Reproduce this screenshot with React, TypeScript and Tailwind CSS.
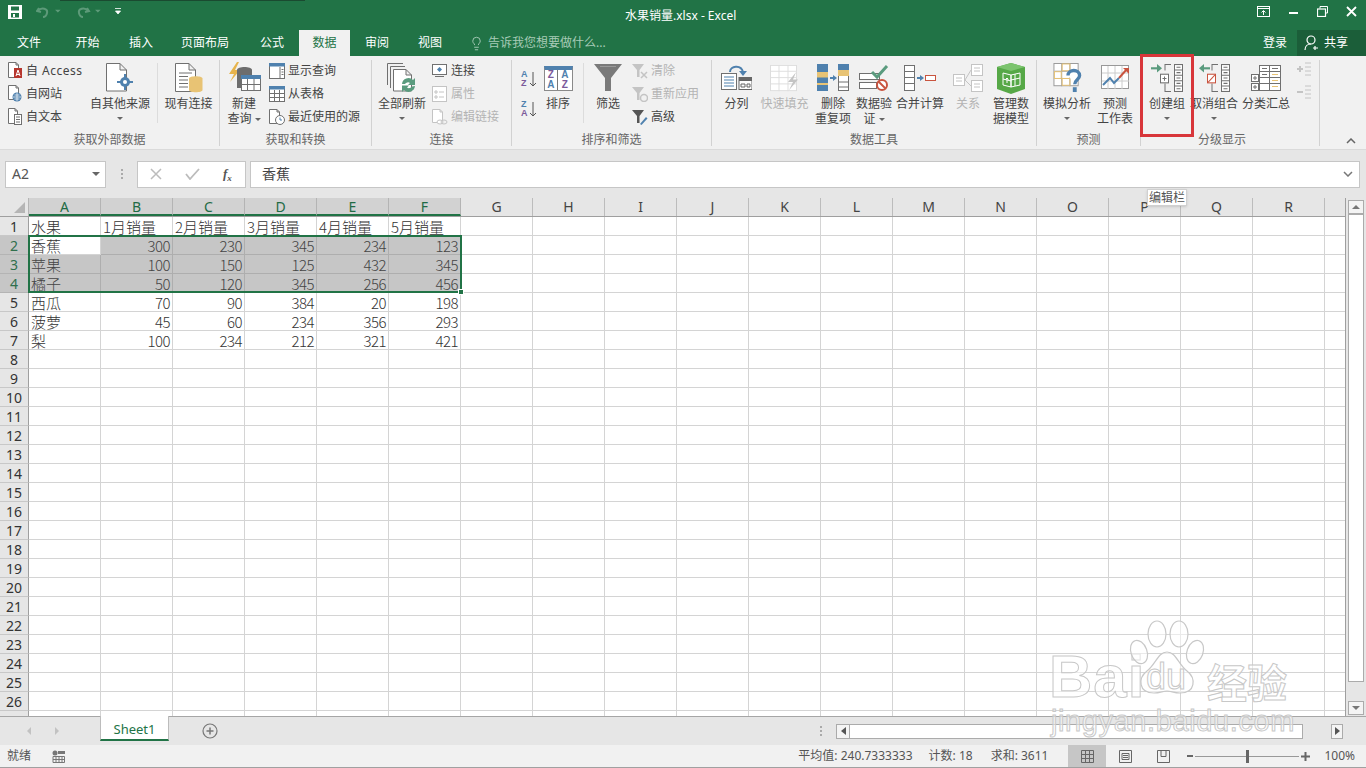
import type { ReactNode } from 'react'
import { Lightbulb } from 'lucide-react'

const FONT = "[font-family:'Noto_Sans','Noto_Sans_CJK_SC',sans-serif]"

const COLS = ['A', 'B', 'C', 'D', 'E', 'F', 'G', 'H', 'I', 'J', 'K', 'L', 'M', 'N', 'O', 'P', 'Q', 'R', '']

const DATA: (string | number)[][] = [
  ['水果', '1月销量', '2月销量', '3月销量', '4月销量', '5月销量'],
  ['香蕉', 300, 230, 345, 234, 123],
  ['苹果', 100, 150, 125, 432, 345],
  ['橘子', 50, 120, 345, 256, 456],
  ['西瓜', 70, 90, 384, 20, 198],
  ['菠萝', 45, 60, 234, 356, 293],
  ['梨', 100, 234, 212, 321, 421],
]

const ROWS = Array.from({ length: 27 }, (_, i) => i + 1)

const LINE = '#707070'
const BLUE = '#4f81ae'
const YEL = '#e8c374'
const OFF = '#c4c4c4'

/* ---------- ribbon icons ---------- */

function Doc({ x = 0, y = 0, w = 24, h = 30, c = LINE }: { x?: number; y?: number; w?: number; h?: number; c?: string }) {
  const f = Math.round(w * 0.3)
  return (
    <path
      d={`M${x + 0.5} ${y + 0.5}H${x + w - f}L${x + w - 0.5} ${y + f}V${y + h - 0.5}H${x + 0.5}ZM${x + w - f} ${y + 0.5}V${y + f}H${x + w - 0.5}`}
      fill="#fff"
      stroke={c}
    />
  )
}

function IconAccess() {
  return (
    <svg width="14" height="17" viewBox="0 0 14 17">
      <Doc w={11} h={16} />
      <rect x="6" y="6" width="8" height="10" fill="#b7372f" />
      <path d="M8 14l2-6 2 6M8.800 12.500h2.400" stroke="#fff" fill="none" />
    </svg>
  )
}

function IconWeb() {
  return (
    <svg width="14" height="17" viewBox="0 0 14 17">
      <Doc w={11} h={15} />
      <circle cx="9" cy="12" r="4.500" fill={BLUE} />
      <path d="M5 12h8M9 8v8M6.500 10h5M6.500 14h5" stroke="#fff" strokeWidth=".7" />
    </svg>
  )
}

function IconText() {
  return (
    <svg width="14" height="17" viewBox="0 0 14 17">
      <Doc w={10} h={16} />
      <rect x="6.500" y="6.500" width="7" height="10" fill="#fff" stroke={LINE} />
      <path d="M8 9h4M8 11.500h4M8 14h4" stroke={LINE} />
    </svg>
  )
}

function IconOther() {
  return (
    <svg width="28" height="31" viewBox="0 0 28 31">
      <path d="M.5.5H14L20.500 7V28H.5Z M14 .5V7H20.500" fill="#fff" stroke={LINE} />
      <path d="M19 11v4M19 23v4M11 19h4M23 19h4" stroke={BLUE} strokeWidth="2" />
      <circle cx="19" cy="19" r="5" fill={BLUE} />
      <circle cx="19" cy="19" r="2" fill="#fff" />
    </svg>
  )
}

function IconExisting() {
  return (
    <svg width="28" height="30" viewBox="0 0 28 30">
      <path d="M.5.5H14L20.500 7V28.500H.5Z M14 .5V7H20.500" fill="#fff" stroke={LINE} />
      <path d="M4 10h13M4 13.500h9M4 17h9M4 20.500h9M4 24h9" stroke={LINE} />
      <path d="M14 15.500c0-3 13.500-3 13.500 0V27c0 3-13.500 3-13.500 0Z" fill={YEL} />
    </svg>
  )
}

function IconNewQuery() {
  return (
    <svg width="33" height="32" viewBox="0 0 33 32">
      <path d="M9 0L1 12h5L2 20 12 8H7l4-8Z" fill="#e8b44c" />
      <path d="M9 8c0-4 15-4 15 0v18H9Z" fill="#6d6d6d" />
      <rect x="13.500" y="13.500" width="19" height="15" fill="#fff" stroke={LINE} />
      <rect x="13" y="13" width="20" height="4" fill={BLUE} />
      <path d="M19.500 17v11M26 17v11M14 22.500h18" stroke={LINE} />
    </svg>
  )
}

function IconShowQuery() {
  return (
    <svg width="16" height="16" viewBox="0 0 16 16">
      <rect x=".5" y=".5" width="15" height="15" fill="#fff" stroke={LINE} />
      <rect width="16" height="3.500" fill={BLUE} />
      <path d="M11 4v11M12.500 6.500h2M12.500 9h2M12.500 11.500h2" stroke={LINE} />
    </svg>
  )
}

function IconFromTable() {
  return (
    <svg width="16" height="16" viewBox="0 0 16 16">
      <rect x=".5" y=".5" width="15" height="15" fill="#fff" stroke={LINE} />
      <rect width="16" height="3.500" fill={BLUE} />
      <path d="M5.500 4v11M10.500 4v11M1 7.500h14M1 11.500h14" stroke={LINE} />
    </svg>
  )
}

function IconRecent() {
  return (
    <svg width="16" height="16" viewBox="0 0 16 16">
      <Doc w={11} h={15} />
      <circle cx="11" cy="11" r="4.500" fill="#fff" stroke={LINE} />
      <path d="M11 8.500V11h2" stroke={BLUE} fill="none" />
    </svg>
  )
}

function IconRefresh() {
  return (
    <svg width="30" height="31" viewBox="0 0 30 31">
      <path d="M.5.5H16M.5.5V22M3.500 3.500H18M3.500 3.500V25" stroke={LINE} fill="none" />
      <path d="M6.500 6.500H19L24.500 12V28H6.500Z M19 6.500V12H24.500" fill="#fff" stroke={LINE} />
      <path d="M15 21a6.500 6.500 0 0 1 11-4l2-2v7h-7l2-2a3.500 3.500 0 0 0-5 1Z" fill="#5a9b7e" />
      <path d="M28 23a6.500 6.500 0 0 1-11 4l-2 2v-6.500h7l-2 2a3.500 3.500 0 0 0 5-1Z" fill="#5a9b7e" />
    </svg>
  )
}

function IconConnect() {
  return (
    <svg width="16" height="16" viewBox="0 0 16 16">
      <rect x=".5" y="1.500" width="14" height="10" fill="#fff" stroke={LINE} />
      <path d="M3 13.500h9" stroke={LINE} />
      <path d="M7.500 4l2.500 2.500L7.500 9 5 6.500Z" fill={BLUE} />
    </svg>
  )
}

function IconProps() {
  return (
    <svg width="16" height="16" viewBox="0 0 16 16">
      <rect x=".5" y=".5" width="14" height="15" fill="#fff" stroke={OFF} />
      <path d="M3 5h2v2H3ZM3 10h2v2H3ZM7 6h5M7 11h5" stroke={OFF} fill="none" />
    </svg>
  )
}

function IconEditLink() {
  return (
    <svg width="16" height="16" viewBox="0 0 16 16">
      <Doc w={11} h={14} c={OFF} />
      <ellipse cx="8" cy="13" rx="3" ry="2" fill="#fff" stroke={OFF} />
      <ellipse cx="12" cy="13" rx="3" ry="2" fill="none" stroke={OFF} />
    </svg>
  )
}

function SortLetters({ top, bottom }: { top: string; bottom: string }) {
  return (
    <div className="flex items-center gap-[1px]">
      <div className="flex flex-col text-[9px] leading-[9px] font-bold [font-family:'Liberation_Sans',sans-serif]">
        <span className="text-[#4f81ae]">{top}</span>
        <span className="text-[#7b5a9b]">{bottom}</span>
      </div>
      <svg width="8" height="15" viewBox="0 0 8 15">
        <path d="M4 0v14M1 11l3 3 3-3" stroke="#555" fill="none" />
      </svg>
    </div>
  )
}

function IconSort() {
  return (
    <div className="w-[29px] h-[25px] border border-[#8a8a8a] border-t-[4px] border-t-[#4f81ae] bg-white grid grid-cols-2 text-[10px] leading-[10px] font-bold text-center [font-family:'Liberation_Sans',sans-serif]">
      <div className="border-r border-[#777] flex flex-col">
        <span className="text-[#7b5a9b]">Z</span>
        <span className="text-[#4f81ae]">A</span>
      </div>
      <div className="flex flex-col">
        <span className="text-[#4f81ae]">A</span>
        <span className="text-[#7b5a9b]">Z</span>
      </div>
    </div>
  )
}

function IconFilter() {
  return (
    <svg width="28" height="28" viewBox="0 0 28 28">
      <path d="M0 0H28L17 14V27H11V14Z" fill="#7a7a7a" />
      <path d="M6 2.500H22" stroke="#9a9a9a" />
    </svg>
  )
}

function SmallFunnel({ c, children }: { c: string; children?: ReactNode }) {
  return (
    <svg width="16" height="16" viewBox="0 0 16 16">
      <path d="M0 1H12L7.500 7V14H5V7Z" fill={c} />
      {children}
    </svg>
  )
}

function IconTextCols() {
  return (
    <svg width="31" height="26" viewBox="0 0 31 26">
      <rect x=".5" y="8.500" width="15" height="16" fill="#fff" stroke={LINE} />
      <path d="M3 12h10M3 15h10M3 18h10M3 21h10" stroke={BLUE} />
      <rect x="18" y="12.500" width="13" height="12" fill="#fff" stroke="#666" />
      <path d="M18 12h13v4H18Z" fill="#666" />
      <path d="M20 19h4v3h-4ZM26 19h3v3h-3Z" fill="none" stroke="#666" />
      <path d="M9 7C9 1 20 -1 22 7" stroke={BLUE} strokeWidth="2" fill="none" />
      <path d="M18 6l4 5 4-5Z" fill={BLUE} />
    </svg>
  )
}

function IconFlashFill() {
  return (
    <svg width="30" height="27" viewBox="0 0 30 30" preserveAspectRatio="none">
      <rect x=".5" y=".5" width="26" height="28" fill="#fff" stroke="#ddd" />
      <path d="M1 7h26M1 14h26M1 21h26M9 1v28M18 1v28" stroke="#ddd" />
      <path d="M26 8l-8 11h5l-4 9 9-12h-5l3-8Z" fill={OFF} />
    </svg>
  )
}

function IconRemoveDup() {
  return (
    <svg width="32" height="28" viewBox="0 0 32 28">
      <rect width="11" height="27" fill={BLUE} />
      <rect y="8" width="11" height="5.500" fill={YEL} />
      <rect y="19" width="11" height="2" fill={YEL} />
      <rect x="21.500" y=".5" width="10" height="26" fill="#fff" stroke={LINE} />
      <rect x="21" width="11" height="6" fill={BLUE} />
      <rect x="21" y="6" width="11" height="6" fill={YEL} />
      <path d="M21 18h11M21 23h11" stroke={LINE} />
      <path d="M13 14h4" stroke={BLUE} strokeWidth="2" />
      <path d="M16 11l4 3-4 3Z" fill={BLUE} />
    </svg>
  )
}

function IconValidate() {
  return (
    <svg width="30" height="26" viewBox="0 0 30 26">
      <rect x=".5" y="8.500" width="20" height="6" fill="#fff" stroke={LINE} />
      <rect x=".5" y="17.500" width="17" height="6" fill="#fff" stroke={LINE} />
      <path d="M13 7l5 5L28 1" stroke="#5a9b7e" strokeWidth="3" fill="none" />
      <circle cx="23" cy="20" r="5" fill="#fff" stroke="#c9543f" strokeWidth="2" />
      <path d="M19.500 16.500l7 7" stroke="#c9543f" strokeWidth="2" />
    </svg>
  )
}

function IconConsolidate() {
  return (
    <svg width="32" height="26" viewBox="0 0 32 26">
      <rect x=".5" y=".5" width="10" height="25" fill="#fff" stroke={LINE} />
      <path d="M1 6.500h9M1 12.500h9M1 18.500h9" stroke={LINE} />
      <path d="M13 13h4" stroke={BLUE} strokeWidth="2" />
      <path d="M16 10l4 3-4 3Z" fill={BLUE} />
      <rect x="21.500" y="10.500" width="10" height="5" fill="#fff" stroke="#c9543f" />
    </svg>
  )
}

function IconRelation() {
  return (
    <svg width="30" height="28" viewBox="0 0 30 28">
      <rect x=".5" y="10.500" width="11" height="11" fill="#fff" stroke={OFF} />
      <rect x="18.500" y=".5" width="11" height="11" fill="#fff" stroke={OFF} />
      <rect x="18.500" y="16.500" width="11" height="11" fill="#fff" stroke={OFF} />
      <path d="M12 16L18 6M12 16l6 6M3 14h6M3 17h6M21 4h6M21 7h6M21 20h6M21 23h6" stroke={OFF} fill="none" />
    </svg>
  )
}

function IconDataModel() {
  return (
    <svg width="30" height="31" viewBox="0 0 30 31">
      <path d="M15 0L29 4V26L15 31 1 26V4Z" fill="#56a847" />
      <path d="M1 4L15 8 29 4 15 0Z" fill="#7cc46e" />
      <path d="M7 10l8 2v12l-8-2Z M15 12l9-2v12l-9 2Z" fill="none" stroke="#fff" />
      <path d="M19 11v12M15 17l9-2M7 16l8 2" stroke="#fff" />
      <path d="M11 20v-5M9.500 16.500L11 15l1.500 1.500" stroke="#fff" fill="none" />
    </svg>
  )
}

function IconWhatIf() {
  return (
    <svg width="29" height="30" viewBox="0 0 29 31">
      <rect x=".5" y=".5" width="25" height="23" fill="#fff" stroke="#999" />
      <path d="M8.500 1v23M17 1v23M1 8.500h25M1 16h25" stroke="#999" />
      <rect x="1" y="9" width="7" height="7" fill="none" stroke={YEL} />
      <rect x="9" y="1" width="8" height="7" fill="none" stroke={YEL} />
      <rect x="9" y="16" width="8" height="7" fill="none" stroke={YEL} />
      <path d="M15 13c0-7 12-7 12 0 0 4-5 4-5 9" stroke={BLUE} strokeWidth="3.500" fill="#fff" />
      <rect x="20" y="25" width="4" height="5" fill={BLUE} />
    </svg>
  )
}

function IconForecast() {
  return (
    <svg width="29" height="26" viewBox="0 0 29 26">
      <rect x=".5" y=".5" width="27" height="23" fill="#fff" stroke="#999" />
      <path d="M7 1v23M14 1v23M21 1v23M1 8h27M1 16h27" stroke="#ccc" />
      <path d="M2 20l7-7 4 5 5-5" stroke={BLUE} strokeWidth="2" fill="none" />
      <path d="M18 13l8-9" stroke="#c9543f" strokeWidth="2" />
      <path d="M22 3h6v6Z" fill="#c9543f" />
    </svg>
  )
}

function Outline() {
  return (
    <>
      <rect x="23.500" y=".5" width="8" height="25" fill="#fff" stroke={LINE} />
      <path d="M24 5.500h7M24 10.500h7M24 15.500h7M24 20.500h7M25.500 3h4M25.500 8h4M25.500 13h4M25.500 18h4M25.500 23h4" stroke={LINE} />
      <path d="M20 .5H14V6M14 18V25.500H20" stroke={LINE} fill="none" />
    </>
  )
}

function IconGroup() {
  return (
    <svg width="32" height="28" viewBox="0 0 32 26" preserveAspectRatio="none">
      <Outline />
      <path d="M0 4h7" stroke="#5a9b7e" strokeWidth="2" />
      <path d="M6 0l5 4-5 4Z" fill="#5a9b7e" />
      <rect x="9.500" y="9.500" width="8" height="8" fill="#fff" stroke={LINE} />
      <path d="M11.500 13.500h4M13.500 11.500v4" stroke={LINE} />
    </svg>
  )
}

function IconUngroup() {
  return (
    <svg width="32" height="28" viewBox="0 0 32 26" preserveAspectRatio="none">
      <Outline />
      <path d="M5 4h7" stroke="#5a9b7e" strokeWidth="2" />
      <path d="M6 0L1 4l5 4Z" fill="#5a9b7e" />
      <rect x="9.500" y="9.500" width="8" height="8" fill="#fff" stroke="#c9543f" />
      <path d="M10 17l7-7" stroke="#c9543f" />
    </svg>
  )
}

function IconSubtotal() {
  return (
    <svg width="30" height="26" viewBox="0 0 30 26">
      <rect x="8.500" y=".5" width="21" height="25" fill="#fff" stroke={LINE} />
      <path d="M8 6.500h21M8 12.500h21M8 18.500h21M18.500 1v24" stroke={LINE} />
      <path d="M11 3.500h5M21 3.500h6M11 9.500h5" stroke={LINE} />
      <path d="M21 9.500h6M21 15.500h6M21 21.500h6" stroke={YEL} />
      <rect x=".5" y="9.500" width="7" height="7" fill="#fff" stroke={LINE} />
      <rect x=".5" y="18.500" width="7" height="7" fill="#fff" stroke={LINE} />
      <path d="M2 13h4M4 11v4M2 22h4M4 20v4" stroke={LINE} />
    </svg>
  )
}

function IconOutlineSmall({ minus }: { minus?: boolean }) {
  return (
    <svg width="16" height="15" viewBox="0 0 16 15">
      <path d="M9 1h6M9 5h6M9 9h6M9 13h6" stroke={OFF} />
      <path d="M1 7h6" stroke={OFF} strokeWidth="2" />
      {!minus && <path d="M4 4v6" stroke={OFF} strokeWidth="2" />}
    </svg>
  )
}

/* ---------- ribbon parts ---------- */

function Caret({ className = '' }: { className?: string }) {
  return <span className={`inline-block w-0 h-0 border-x-[3px] border-x-transparent border-t-[3px] border-t-[#666] ${className}`} />
}

function Large({ w, icon, lines, caret, off }: { w: number; icon: ReactNode; lines: string[]; caret?: 'below' | 'inline'; off?: boolean }) {
  return (
    <div className="flex flex-col items-center shrink-0" style={{ width: w }}>
      <div className="h-[30px] mb-[3px] flex items-center justify-center">{icon}</div>
      <div className={`text-xs leading-[15px] text-center whitespace-nowrap ${off ? 'text-[#b4b4b4]' : 'text-[#444]'}`}>
        {lines.map((l, i) => (
          <div key={i}>
            {l}
            {caret === 'inline' && i === lines.length - 1 && <Caret className="ml-[3px] mb-[2px]" />}
          </div>
        ))}
        {caret === 'below' && (
          <div className="h-[15px] flex items-center justify-center">
            <Caret />
          </div>
        )}
      </div>
    </div>
  )
}

function Small({ icon, label, off, wide }: { icon: ReactNode; label: string; off?: boolean; wide?: boolean }) {
  return (
    <div className={`h-[23px] flex items-center gap-[3px] text-xs whitespace-nowrap ${off ? 'text-[#b4b4b4]' : 'text-[#444]'} ${wide ? 'tracking-[0.5px]' : ''}`}>
      <div className="w-4 flex justify-center">{icon}</div>
      {label}
    </div>
  )
}

function Stack({ w, pl = 0, children }: { w: number; pl?: number; children: ReactNode }) {
  return (
    <div className="flex flex-col shrink-0 -mt-[4px]" style={{ width: w, paddingLeft: pl }}>
      {children}
    </div>
  )
}

function Group({ w, label, labelPad, children }: { w: number; label: string; labelPad?: boolean; children: ReactNode }) {
  return (
    <div className="shrink-0 flex" style={{ width: w + 1 }}>
      <div className="flex flex-col" style={{ width: w }}>
        <div className="flex h-[75px] pt-[7px]">{children}</div>
        <div className={`h-[19px] text-xs leading-[19px] text-center text-[#666] ${labelPad ? 'pr-4' : ''}`}>{label}</div>
      </div>
      <div className="w-px h-[86px] mt-1 bg-[#d2d2d2]" />
    </div>
  )
}

function Ribbon() {
  return (
    <div className="h-[94px] bg-[#f1f1f1] border-b border-[#dadada] flex">
      <Group w={219} label="获取外部数据">
        <Stack w={88} pl={7}>
          <Small icon={<IconAccess />} label="自 Access" wide />
          <Small icon={<IconWeb />} label="自网站" />
          <Small icon={<IconText />} label="自文本" />
        </Stack>
        <Large w={64} icon={<IconOther />} lines={['自其他来源']} caret="below" />
        <div className="w-px h-[60px] ml-[5px] bg-[#dcdcdc]" />
        <Large w={61} icon={<IconExisting />} lines={['现有连接']} />
      </Group>
      <Group w={151} label="获取和转换">
        <Large w={48} icon={<IconNewQuery />} lines={['新建', '查询']} caret="inline" />
        <Stack w={102} pl={1}>
          <Small icon={<IconShowQuery />} label="显示查询" />
          <Small icon={<IconFromTable />} label="从表格" />
          <Small icon={<IconRecent />} label="最近使用的源" />
        </Stack>
      </Group>
      <Group w={139} label="连接">
        <Large w={60} icon={<IconRefresh />} lines={['全部刷新']} caret="below" />
        <Stack w={78}>
          <Small icon={<IconConnect />} label="连接" />
          <Small icon={<IconProps />} label="属性" off />
          <Small icon={<IconEditLink />} label="编辑链接" off />
        </Stack>
      </Group>
      <Group w={199} label="排序和筛选">
        <div className="w-[28px] shrink-0 pl-[9px] pt-[7px] flex flex-col gap-[12px]">
          <SortLetters top="A" bottom="Z" />
          <SortLetters top="Z" bottom="A" />
        </div>
        <Large w={36} icon={<IconSort />} lines={['排序']} />
        <div className="w-[7px] shrink-0" />
        <div className="w-px h-[60px] bg-[#dcdcdc]" />
        <Large w={48} icon={<IconFilter />} lines={['筛选']} />
        <Stack w={78}>
          <Small icon={<SmallFunnel c={OFF}><path d="M9 9l6 6M15 9l-6 6" stroke={OFF} strokeWidth="1.500" /></SmallFunnel>} label="清除" off />
          <Small icon={<SmallFunnel c={OFF}><circle cx="12" cy="12" r="3.500" fill="none" stroke={OFF} strokeWidth="1.500" /></SmallFunnel>} label="重新应用" off />
          <Small icon={<SmallFunnel c="#555"><path d="M8 15l6-7 1.500 1.500L9.500 16Z" fill={BLUE} /></SmallFunnel>} label="高级" />
        </Stack>
      </Group>
      <Group w={324} label="数据工具">
        <Large w={49} icon={<IconTextCols />} lines={['分列']} />
        <Large w={47} icon={<IconFlashFill />} lines={['快速填充']} off />
        <Large w={50} icon={<IconRemoveDup />} lines={['删除', '重复项']} />
        <Large w={32} icon={<IconValidate />} lines={['数据验', '证']} caret="inline" />
        <Large w={60} icon={<IconConsolidate />} lines={['合并计算']} />
        <Large w={36} icon={<IconRelation />} lines={['关系']} off />
        <Large w={50} icon={<IconDataModel />} lines={['管理数', '据模型']} />
      </Group>
      <Group w={103} label="预测">
        <div className="w-[3px] shrink-0" />
        <Large w={54} icon={<IconWhatIf />} lines={['模拟分析']} caret="below" />
        <Large w={42} icon={<IconForecast />} lines={['预测', '工作表']} />
      </Group>
      <Group w={178} label="分级显示" labelPad>
        <Large w={52} icon={<IconGroup />} lines={['创建组']} caret="below" />
        <Large w={42} icon={<IconUngroup />} lines={['取消组合']} caret="below" />
        <div className="w-[5px] shrink-0" />
        <Large w={52} icon={<IconSubtotal />} lines={['分类汇总']} />
        <div className="flex flex-col gap-2 ml-[4px] -mt-[1px]">
          <IconOutlineSmall />
          <IconOutlineSmall minus />
        </div>
      </Group>
      <div className="flex-1 flex flex-col justify-end items-end pr-[10px] pb-[5px]">
        <svg width="10" height="6" viewBox="0 0 10 6">
          <path d="M1 5l4-4 4 4" stroke="#666" strokeWidth="1.500" fill="none" />
        </svg>
      </div>
    </div>
  )
}

/* ---------- title + tabs ---------- */

function TitleBar() {
  return (
    <div className="h-[30px] bg-[#217346] flex items-center relative">
      <svg className="ml-[8px] mb-[7px]" width="14" height="14" viewBox="0 0 14 14">
        <path d="M0 0H14V14H0Z M3 1.500V5.500H11V1.500Z M3 8V12.500H11V8Z" fill="#fff" fillRule="evenodd" />
        <rect x="5" y="9" width="2" height="3" fill="#fff" />
      </svg>
      <svg className="ml-[14px] mb-[7px]" width="30" height="14" viewBox="0 0 30 14">
        <path d="M3 3L1 6l4 1M1.500 6C6 1.500 12 4 11 8c-.4 2-2 4-4 4" stroke="#5d9a79" strokeWidth="2" fill="none" />
        <path d="M20 6l3 3 3-3Z" fill="#5d9a79" transform="translate(0 -1) scale(.95)" />
      </svg>
      <svg className="ml-[10px] mb-[7px]" width="30" height="14" viewBox="0 0 30 14">
        <path d="M11 3l2 3-4 1M12.500 6C8 1.500 2 4 3 8c.4 2 2 4 4 4" stroke="#5d9a79" strokeWidth="2" fill="none" />
        <path d="M20 6l3 3 3-3Z" fill="#5d9a79" transform="translate(0 -1) scale(.95)" />
      </svg>
      <svg className="ml-[8px] mb-[8px]" width="8" height="9" viewBox="0 0 8 9">
        <path d="M1 1.500h6M1.500 4h5L4 7Z" stroke="#fff" fill="#fff" strokeWidth=".8" />
      </svg>
      <div className="absolute left-[625px] top-[7px] text-xs leading-[17px] text-white">水果销量.xlsx - Excel</div>
      <div className="ml-auto flex items-center mb-[8px] pr-[9px] gap-[18px]">
        <svg width="13" height="11" viewBox="0 0 13 11">
          <rect x=".5" y=".5" width="12" height="10" fill="none" stroke="#fff" />
          <path d="M1 2.500h11" stroke="#fff" />
          <path d="M6.500 9V5M4.500 6.500l2-2 2 2" stroke="#fff" fill="none" />
        </svg>
        <svg width="11" height="11" viewBox="0 0 11 11">
          <path d="M1 7h9" stroke="#fff" strokeWidth="2" />
        </svg>
        <svg width="11" height="11" viewBox="0 0 11 11">
          <path d="M3 2.500V.5h7.500V7H8.500" stroke="#fff" fill="none" />
          <rect x=".5" y="3" width="8" height="7.500" fill="none" stroke="#fff" strokeWidth="1.200" />
        </svg>
        <svg width="11" height="11" viewBox="0 0 11 11">
          <path d="M1 1l9 9M10 1l-9 9" stroke="#fff" strokeWidth="1.800" />
        </svg>
      </div>
      {/* edge of the window behind */}
      <div className="absolute left-[60px] top-0 w-[245px] h-px bg-[#1a4a30]" />
    </div>
  )
}

function TabBar() {
  const tabs: [string, number][] = [
    ['文件', 58],
    ['开始', 59],
    ['插入', 48],
    ['页面布局', 80],
    ['公式', 54],
  ]
  return (
    <div className="h-[26px] bg-[#217346] flex text-xs text-white leading-[26px]">
      {tabs.map(([t, w]) => (
        <div key={t} className="text-center" style={{ width: w }}>
          {t}
        </div>
      ))}
      <div className="w-[51px] bg-[#f1f1f1] text-[#217346] text-center">数据</div>
      <div className="w-[54px] text-center">审阅</div>
      <div className="w-[52px] text-center">视图</div>
      <div className="ml-[13px] flex items-center gap-[4px] text-[#a8cbb7]">
        <Lightbulb size={15} strokeWidth={1.5} />
        告诉我您想要做什么...
      </div>
      <div className="ml-auto pr-[10px]">登录</div>
      <div className="w-[69px] bg-[#1b5e39] flex items-center pl-[7px] gap-[4px]">
        <svg width="16" height="16" viewBox="0 0 16 16">
          <circle cx="7" cy="5" r="4" fill="none" stroke="#fff" strokeWidth="1.200" />
          <path d="M1 15c0-4 3-6 6-6M11 11v4M9 13h5" stroke="#fff" strokeWidth="1.200" fill="none" />
        </svg>
        共享
      </div>
    </div>
  )
}

/* ---------- formula bar ---------- */

function FormulaBar() {
  return (
    <div className="h-[48px] bg-[#e6e6e6] flex items-center pl-[5px] pr-[6px]">
      <div className="w-[101px] h-[27px] bg-white border border-[#c6c6c6] flex items-center pl-[6px] pr-[5px] text-sm text-[#555]">
        A2
        <Caret className="ml-auto border-x-[4px] border-t-[4px]" />
      </div>
      <div className="w-[31px] flex flex-col items-center gap-[2px]">
        <span className="w-[2px] h-[2px] bg-[#aaa]" />
        <span className="w-[2px] h-[2px] bg-[#aaa]" />
        <span className="w-[2px] h-[2px] bg-[#aaa]" />
      </div>
      <div className="w-[109px] h-[27px] bg-white border border-[#c6c6c6] flex items-center pl-[12px] gap-[23px]">
        <svg width="12" height="12" viewBox="0 0 12 12">
          <path d="M1 1l10 10M11 1L1 11" stroke="#bcbcbc" strokeWidth="1.500" />
        </svg>
        <svg width="15" height="12" viewBox="0 0 15 12">
          <path d="M1 6l4 5L14 1" stroke="#bcbcbc" strokeWidth="1.800" fill="none" />
        </svg>
        <span className="text-[13px] italic text-[#555] [font-family:'Liberation_Serif',serif] font-bold">
          f<sub className="text-[9px]">x</sub>
        </span>
      </div>
      <div className="ml-[4px] flex-1 h-[27px] bg-white border border-[#c6c6c6] flex items-center pl-[11px] pr-[6px] text-sm text-[#444]">
        香蕉
        <svg className="ml-auto" width="10" height="6" viewBox="0 0 10 6">
          <path d="M1 1l4 4 4-4" stroke="#777" strokeWidth="1.500" fill="none" />
        </svg>
      </div>
    </div>
  )
}

/* ---------- grid ---------- */

function Cell({ row, col }: { row: number; col: number }) {
  const value = DATA[row - 1]?.[col]
  const selected = row >= 2 && row <= 4 && col <= 5 && !(row === 2 && col === 0)
  const isNum = typeof value === 'number'
  return (
    <div
      className={`w-[72px] shrink-0 h-full border-r border-b leading-[20px] whitespace-nowrap ${
        selected ? 'bg-[#c6c6c6] border-[#aeaeae] text-[#444]' : 'bg-white border-[#d4d4d4] text-[#333]'
      } ${isNum ? 'text-right pr-[2px] text-[15px] tracking-[-0.5px]' : 'pl-[2px] text-[15px]'}`}
    >
      {value}
    </div>
  )
}

function ScrollBtn({ children }: { children: ReactNode }) {
  return (
    <div className="h-[14px] shrink-0 bg-[#f4f4f4] border border-[#ababab] flex items-center justify-center">
      <svg width="10" height="6" viewBox="0 0 10 6">
        {children}
      </svg>
    </div>
  )
}

function Sheet() {
  return (
    <div className="relative h-[518px] flex bg-[#e6e6e6] overflow-hidden">
      <div className="w-[1346px] border-r border-[#9f9f9f] overflow-hidden [font-family:'Noto_Sans_CJK_SC',sans-serif] font-light">
        <div className="flex h-[19px] bg-[#e6e6e6] border-b border-[#9f9f9f] [font-family:'Noto_Sans',sans-serif] font-normal text-[14px] leading-[18px]">
          <div className="w-[29px] shrink-0 border-r border-[#b5b5b5] flex items-end justify-end pr-[3px] pb-[3px]">
            <div className="w-0 h-0 border-l-[11px] border-l-transparent border-b-[11px] border-b-[#b5b5b5]" />
          </div>
          {COLS.map((c, i) => (
            <div
              key={i}
              className={`w-[72px] shrink-0 text-center border-r ${
                i < 6 ? 'bg-[#d2d2d2] border-[#b4b4b4] text-[#1f6b45] border-b-2 border-b-[#217346]' : 'border-[#bcbcbc] text-[#444]'
              }`}
            >
              {c}
            </div>
          ))}
        </div>
        {ROWS.map((r) => {
          const sel = r >= 2 && r <= 4
          return (
            <div key={r} className="flex h-[19px]">
              <div
                className={`w-[29px] shrink-0 text-center border-r border-b border-r-[#9f9f9f] text-[14px] leading-[19px] [font-family:'Noto_Sans',sans-serif] font-normal ${
                  sel ? 'bg-[#c6c6c6] border-b-[#b4b4b4] text-[#2f6f4c]' : 'bg-[#e6e6e6] border-b-[#c8c8c8] text-[#333]'
                }`}
              >
                {r}
              </div>
              {COLS.map((_, c) => (
                <Cell key={c} row={r} col={c} />
              ))}
            </div>
          )
        })}
      </div>
      {/* selection outline */}
      <div className="absolute left-[28px] top-[37px] w-[434px] h-[58px] border-2 border-[#217346]" />
      <div className="absolute left-[458px] top-[91px] w-[6px] h-[6px] bg-[#217346] border border-white" />
      {/* vertical scrollbar */}
      <div className="ml-[2px] w-[16px] flex flex-col">
        <div className="h-[2px]" />
        <ScrollBtn>
          <path d="M1 5l4-4 4 4Z" fill="#777" />
        </ScrollBtn>
        <div className="h-[468px] bg-white border border-[#ababab]" />
        <div className="h-[19px]" />
        <ScrollBtn>
          <path d="M1 1l4 4 4-4Z" fill="#777" />
        </ScrollBtn>
      </div>
    </div>
  )
}

/* ---------- sheet tabs + status ---------- */

function SheetTabs() {
  return (
    <div className="h-[29px] bg-[#e6e6e6] border-t border-[#a6a6a6] flex items-center">
      <div className="w-[100px] flex items-center pl-[27px] gap-[24px]">
        <svg width="4" height="8" viewBox="0 0 4 8">
          <path d="M4 0v8L0 4Z" fill="#c2c2c2" />
        </svg>
        <svg width="4" height="8" viewBox="0 0 4 8">
          <path d="M0 0v8l4-4Z" fill="#c2c2c2" />
        </svg>
      </div>
      <div className="w-[69px] h-[26px] -mt-[2px] self-start bg-white border-x border-b-2 border-x-[#bcbcbc] border-b-[#217346] text-[#217346] text-[13px] text-center leading-[28px]">
        Sheet1
      </div>
      <svg className="ml-[33px]" width="16" height="16" viewBox="0 0 16 16">
        <circle cx="8" cy="8" r="7" fill="none" stroke="#777" strokeWidth="1.200" />
        <path d="M4.500 8h7M8 4.500v7" stroke="#777" strokeWidth="1.500" />
      </svg>
      <div className="ml-[602px] flex flex-col gap-[2px]">
        <span className="w-[2px] h-[2px] bg-[#aaa]" />
        <span className="w-[2px] h-[2px] bg-[#aaa]" />
        <span className="w-[2px] h-[2px] bg-[#aaa]" />
      </div>
      <div className="ml-[14px] w-[507px] h-[15px] flex">
        <div className="w-[14px] bg-[#f4f4f4] border border-[#ababab] flex items-center justify-center">
          <svg width="5" height="8" viewBox="0 0 5 8">
            <path d="M5 0v8L0 4Z" fill="#555" />
          </svg>
        </div>
        <div className="w-[453px] bg-white border-y border-r border-[#ababab]" />
        <div className="w-[28px]" />
        <div className="w-[12px] bg-[#f4f4f4] border border-[#ababab] flex items-center justify-center">
          <svg width="5" height="8" viewBox="0 0 5 8">
            <path d="M0 0v8l5-4Z" fill="#555" />
          </svg>
        </div>
      </div>
    </div>
  )
}

function StatusBar() {
  return (
    <div className="h-[23px] bg-[#f1f1f1] border-b border-[#a0a0a0] flex items-center text-xs text-[#555]">
      <span className="ml-[7px]">就绪</span>
      <svg className="ml-[21px]" width="13" height="13" viewBox="0 0 13 13">
        <circle cx="3" cy="3" r="2.500" fill="#777" />
        <rect x="6" y="1" width="7" height="3" fill="#777" />
        <path d="M1 6.500h11.500v6H1ZM1 9.500h11.500M4 6.500v6M7 6.500v6M10 6.500v6" stroke="#777" fill="none" />
      </svg>
      <span className="ml-auto">平均值: 240.7333333</span>
      <span className="ml-[16px]">计数: 18</span>
      <span className="ml-[18px]">求和: 3611</span>
      <div className="ml-[20px] w-[38px] h-[22px] bg-[#c6c6c6] flex items-center justify-center">
        <svg width="13" height="13" viewBox="0 0 13 13">
          <path d="M.5.5h12v12H.5ZM4.500.5v12M8.500.5v12M.5 4.500h12M.5 8.500h12" stroke="#666" fill="none" />
        </svg>
      </div>
      <div className="w-[38px] flex justify-center">
        <svg width="13" height="13" viewBox="0 0 13 13">
          <path d="M.5.5h12v12H.5ZM3 3.500h7v6H3ZM4 5.500h5M4 7.500h5" stroke="#666" fill="none" />
        </svg>
      </div>
      <div className="w-[38px] flex justify-center">
        <svg width="13" height="13" viewBox="0 0 13 13">
          <path d="M.5.5h12v12H.5ZM4 .5v6h5v-6" stroke="#666" fill="none" />
        </svg>
      </div>
      <div className="ml-[5px] w-[6px] h-[2px] bg-[#666]" />
      <div className="ml-[2px] w-[104px] h-px bg-[#999] relative">
        <div className="absolute left-[51px] -top-[6px] w-[3px] h-[13px] bg-[#666]" />
      </div>
      <svg className="ml-[2px]" width="9" height="9" viewBox="0 0 9 9">
        <path d="M0 4.500h9M4.500 0v9" stroke="#666" strokeWidth="2" />
      </svg>
      <span className="ml-[14px] mr-[11px]">100%</span>
    </div>
  )
}

function Watermark() {
  const outline = 'absolute whitespace-nowrap font-bold text-white/50 [-webkit-text-stroke:1px_#c8c8c8]'
  const latin = "[font-family:'Liberation_Sans',sans-serif]"
  return (
    <div className="absolute left-[1040px] top-[618px] w-[270px] h-[125px] pointer-events-none">
      <span className={`${outline} ${latin} left-[9px] top-[24px] text-[60px] leading-[70px] tracking-[1px]`}>Bai</span>
      <svg className="absolute left-[89px] top-[2px]" width="76" height="80" viewBox="0 0 76 80">
        <g fill="#ffffff80" stroke="#c8c8c8" strokeWidth="1.200">
          <ellipse cx="28" cy="14" rx="9" ry="13" />
          <ellipse cx="50" cy="14" rx="9" ry="13" />
          <ellipse cx="10" cy="32" rx="8" ry="12" transform="rotate(-20 10 32)" />
          <ellipse cx="66" cy="32" rx="8" ry="12" transform="rotate(20 66 32)" />
          <path d="M38 32c-9 0-11 12-20 19-9 7-9 22 7 22 6 0 9-2 13-2s7 2 13 2c16 0 16-15 7-22-9-7-11-19-20-19Z" />
        </g>
      </svg>
      <span className={`${outline} ${latin} left-[106px] top-[39px] text-[36px] leading-[40px] font-normal`}>du</span>
      <span className={`${outline} left-[167px] top-[40px] text-[40px] leading-[46px] [font-family:'Noto_Sans_CJK_SC',sans-serif]`}>经验</span>
      <span className={`${outline} ${latin} left-[11px] top-[86px] text-[29px] leading-[34px] font-normal tracking-[.6px]`}>jingyan.baidu.com</span>
    </div>
  )
}

export default function App() {
  return (
    <div className={`relative w-[1366px] h-[768px] overflow-hidden bg-[#e6e6e6] ${FONT}`}>
      <TitleBar />
      <TabBar />
      <Ribbon />
      <FormulaBar />
      <Sheet />
      <SheetTabs />
      <StatusBar />
      <Watermark />
      {/* red annotation from the tutorial */}
      <div className="absolute left-[1140px] top-[54px] w-[54px] h-[83px] border-[3px] border-[#d8363a]" />
      {/* tooltip */}
      <div className="absolute left-[1147px] top-[189px] w-[40px] h-[17px] bg-white border border-[#d0d0d0] shadow-sm text-xs leading-[15px] text-[#555] text-center">
        编辑栏
      </div>
    </div>
  )
}
